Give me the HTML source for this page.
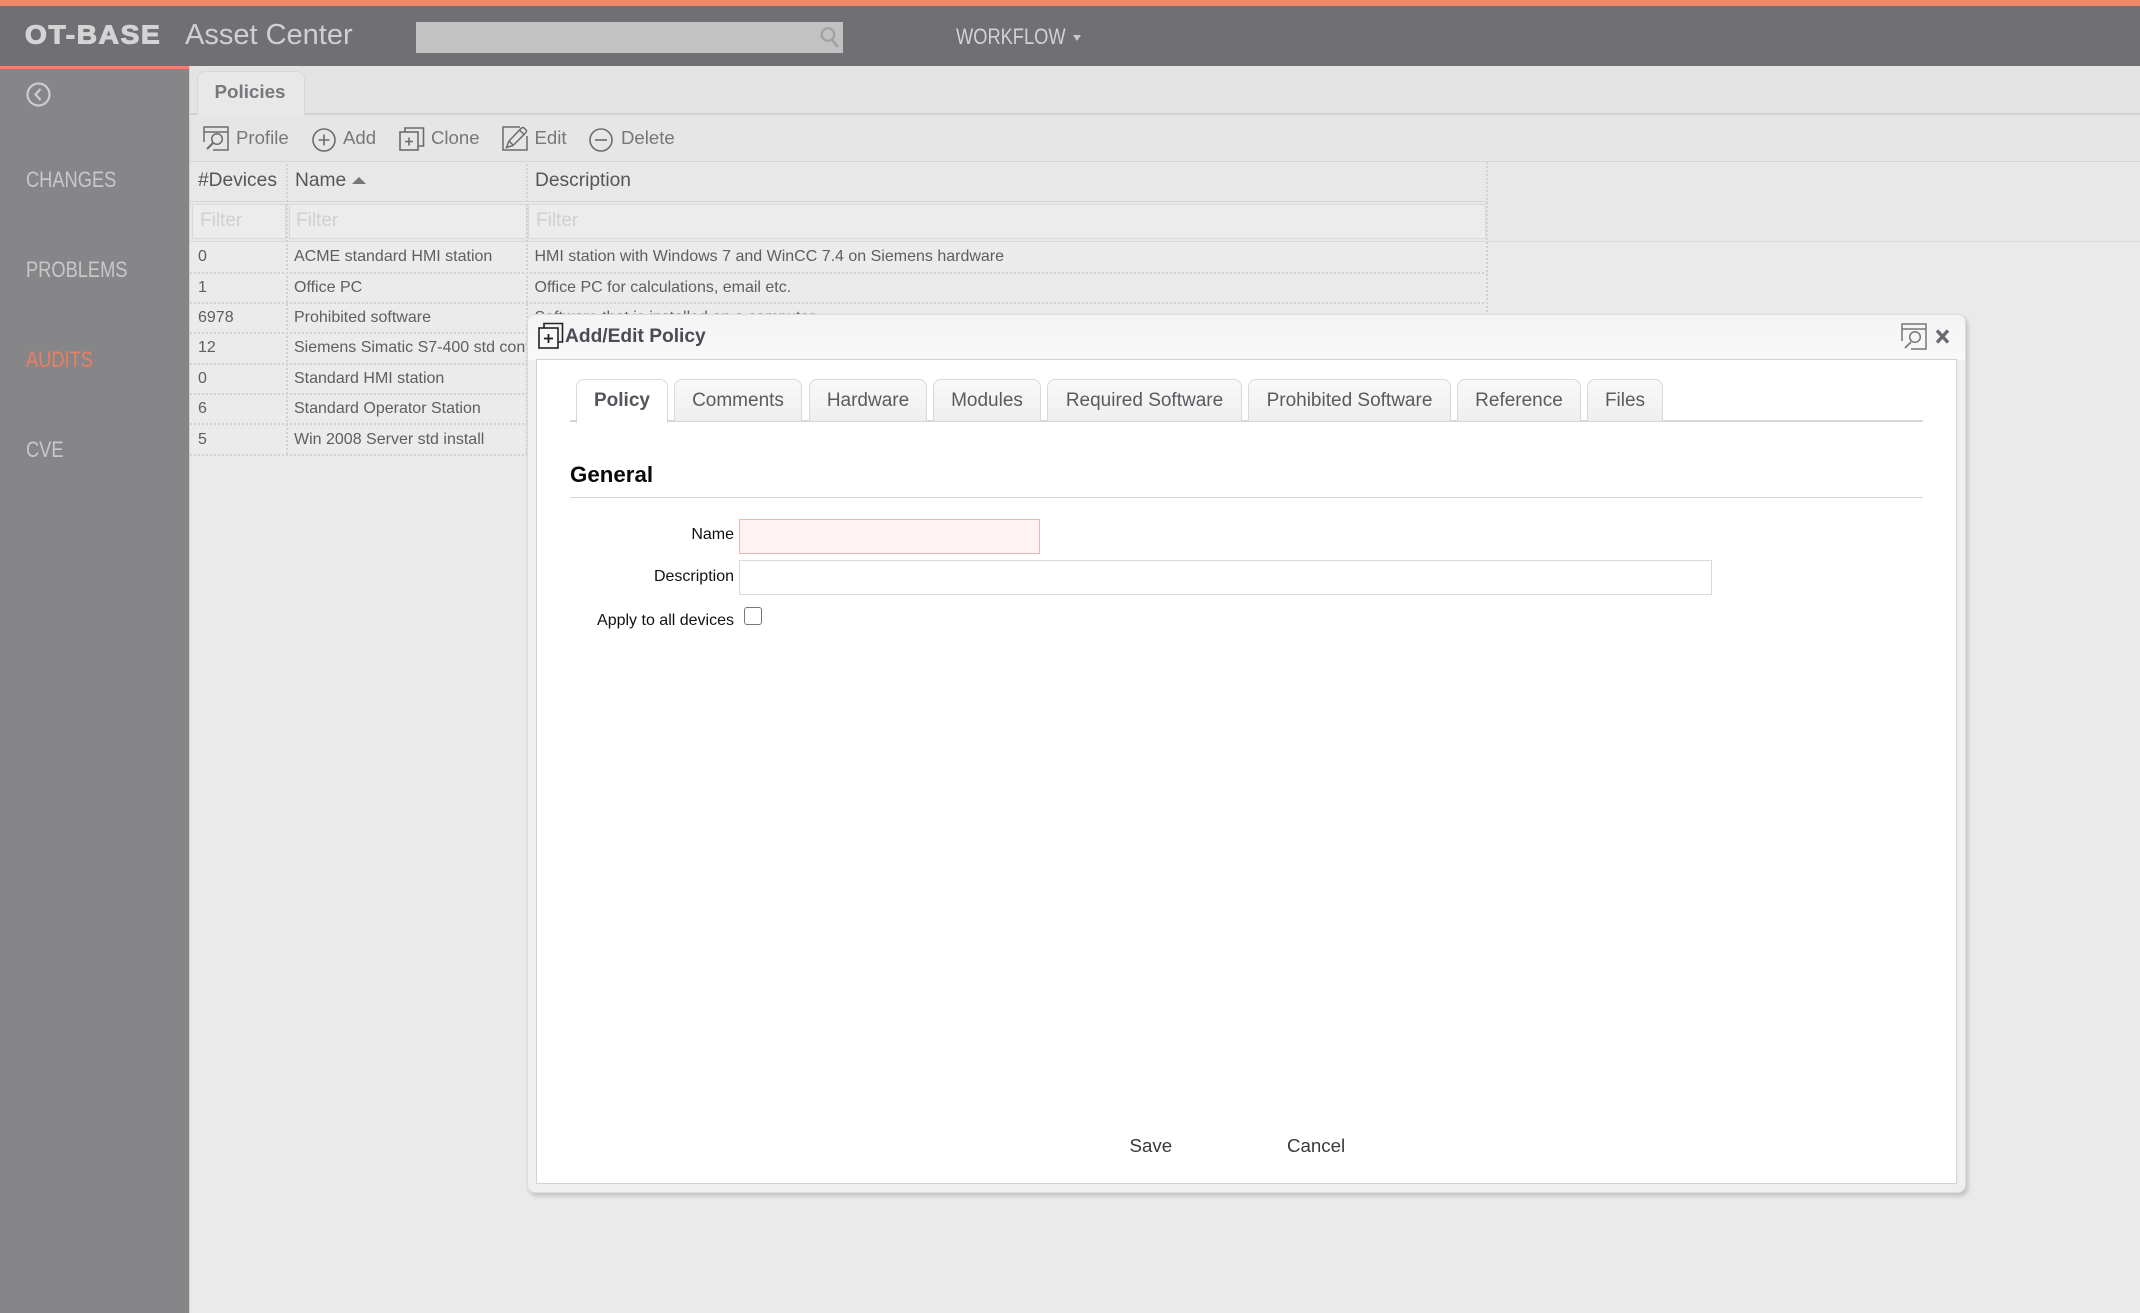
<!DOCTYPE html>
<html><head><meta charset="utf-8"><style>
html,body{margin:0;padding:0;width:2140px;height:1313px;overflow:hidden;background:#eaeaea}
body{font-family:"Liberation Sans",Arial,sans-serif;position:relative}
div,span,svg{position:absolute;box-sizing:border-box}
.t{white-space:nowrap;line-height:24px;height:24px}
.n{font-size:22px;color:#c8c8ca;transform:scaleX(.83);transform-origin:0 50%;left:25.5px}
.tb{font-size:18.6px;color:#77777a;top:125.5px}
.th{font-size:19.2px;color:#55555a;top:169px}
.fi{top:204px;height:35px;border:1.5px solid #dadada;background:#ececec}
.fl{font-size:19px;color:#d0d0d0;top:209px}
.c{font-size:16px;color:#5e5e62}
.hl{left:190px;height:2px;background:repeating-linear-gradient(90deg,#d2d2d2 0 2px,transparent 2px 4px)}
.vl{width:2px;background:repeating-linear-gradient(0deg,#d2d2d2 0 2px,transparent 2px 4px)}
.tab{top:379px;height:42px;border:1.5px solid #d9d9d9;border-bottom:none;border-radius:8px 8px 0 0;background:linear-gradient(#f9f9f9,#eeeeee);font-size:19px;color:#5a5a60;text-align:center;line-height:41px}
.lb{font-size:16px;color:#111;right:1406px}
</style></head><body>

<div style="left:0;top:0;width:2140px;height:66px;background:#706f74"></div>
<div style="left:0;top:0;width:2140px;height:6px;background:#ef8769"></div>
<span class="t" style="left:25px;top:21px;font-size:28px;line-height:28px;height:28px;font-weight:bold;color:#d4d4d5;letter-spacing:1.7px;-webkit-text-stroke:1.2px #d4d4d5;transform:scaleY(.92);transform-origin:0 50%">OT-BASE</span>
<span class="t" style="left:185px;top:17px;font-size:29px;line-height:36px;height:36px;color:#d0d0d2">Asset Center</span>
<div style="left:416px;top:22px;width:427px;height:31px;background:#c2c2c2"></div>
<svg style="left:819px;top:26px" width="22" height="22" viewBox="0 0 22 22" fill="none" stroke="#a3a3a3" stroke-width="2.4"><circle cx="9" cy="8.500" r="6.300"/><path d="M13 14l6 7" stroke-width="3"/></svg>
<span class="t n" style="left:955.5px;top:25px;font-size:22px;color:#d2d2d4">WORKFLOW</span>
<svg style="left:1073px;top:35px" width="8" height="6"><path d="M0 0h8L4 6z" fill="#c8c8ca"/></svg>

<div style="left:0;top:66px;width:189px;height:1247px;background:#868688"></div>
<div style="left:189px;top:66px;width:1px;height:1247px;background:#d0d0d0"></div>
<div style="left:0;top:66px;width:189px;height:3px;background:#ef8164"></div>
<svg style="left:26px;top:82px" width="25" height="25" viewBox="0 0 25 25" fill="none" stroke="#cdcdcf" stroke-width="2.2"><circle cx="12.500" cy="12.500" r="11"/><path d="M14.500 7l-5 5.500 5 5.500"/></svg>
<span class="t n" style="top:168px">CHANGES</span>
<span class="t n" style="top:258px">PROBLEMS</span>
<span class="t n" style="top:348px;color:#ef7d5f">AUDITS</span>
<span class="t n" style="top:438px">CVE</span>

<div style="left:190px;top:66px;width:1950px;height:47px;background:#e3e3e3"></div>
<div style="left:190px;top:113px;width:1950px;height:2px;background:#d2d2d2"></div>
<div style="left:197px;top:71px;width:108px;height:44px;background:#e8e8e8;border:1px solid #d8d8d8;border-bottom:none;border-radius:8px 8px 0 0"></div>
<span class="t" style="left:214.5px;top:80px;font-size:18.8px;font-weight:bold;color:#77777c">Policies</span>
<div style="left:190px;top:115px;width:1950px;height:46px;background:#e6e6e6"></div>
<div style="left:190px;top:161px;width:1950px;height:80px;background:#e8e8e8"></div>
<div style="left:190px;top:161px;width:1950px;height:1px;background:#d6d6d6"></div>
<div style="left:190px;top:241px;width:1950px;height:1px;background:#d9d9d9"></div>

<svg style="left:203px;top:126px" width="26" height="25" viewBox="0 0 26 25" fill="none" stroke="#6c6c6e" stroke-width="1.5"><path d="M1 16V1h24v23H10M1 6h24"/><circle cx="14" cy="13" r="5.300"/><path d="M10 17l-6 6" stroke-width="2"/></svg>
<span class="t tb" style="left:236px">Profile</span>
<svg style="left:312px;top:128px" width="24" height="24" viewBox="0 0 24 24" fill="none" stroke="#6c6c6e" stroke-width="1.6"><circle cx="12" cy="12" r="11"/><path d="M12 6.500v11M6.500 12h11"/></svg>
<span class="t tb" style="left:343px">Add</span>
<svg style="left:399px;top:126px" width="26" height="25" viewBox="0 0 26 25" fill="none" stroke="#6c6c6e" stroke-width="1.6"><rect x="1" y="6" width="18" height="18"/><path d="M6 6V2h18.500v18H19M10 11.500v8M6 15.500h8"/></svg>
<span class="t tb" style="left:431px">Clone</span>
<svg style="left:502px;top:126px" width="26" height="25" viewBox="0 0 26 25" fill="none" stroke="#6c6c6e" stroke-width="1.5"><path d="M18 1H1v23h24V10"/><path d="M4.500 21.500l2.500-6.500L19.500 2q1.500-1 2.500 0l2 2q1 1 0 2.500L11 19.500zM7 15l4.500 4.500M17.500 4l4.500 4.500"/></svg>
<span class="t tb" style="left:534.5px">Edit</span>
<svg style="left:589px;top:128px" width="24" height="24" viewBox="0 0 24 24" fill="none" stroke="#6c6c6e" stroke-width="1.6"><circle cx="12" cy="12" r="11"/><path d="M6 12h12"/></svg>
<span class="t tb" style="left:621px">Delete</span>

<span class="t th" style="left:198px">#Devices</span>
<span class="t th" style="left:295px">Name</span>
<svg style="left:352px;top:177px" width="14" height="7"><path d="M0 7h14L7 0z" fill="#77777a"/></svg>
<span class="t th" style="left:535px">Description</span>
<div style="left:190px;top:201px;width:1297px;height:1px;background:repeating-linear-gradient(90deg,#c8c8c8 0 1px,transparent 1px 2px)"></div>

<div class="fi" style="left:192px;width:94px"></div>
<div class="fi" style="left:288.5px;width:238px"></div>
<div class="fi" style="left:528px;width:958px"></div>
<span class="t fl" style="left:200px">Filter</span>
<span class="t fl" style="left:296px">Filter</span>
<span class="t fl" style="left:536px">Filter</span>

<div style="left:190px;top:242px;width:1297px;height:212px;background:#ebebeb"></div>
<div class="vl" style="left:286px;top:162px;height:292px"></div>
<div class="vl" style="left:526px;top:162px;height:292px"></div>
<div class="vl" style="left:1486px;top:162px;height:150px"></div>
<div class="hl" style="top:272px;width:1297px"></div>
<div class="hl" style="top:302px;width:1297px"></div>
<div class="hl" style="top:332px;width:340px"></div>
<div class="hl" style="top:363px;width:340px"></div>
<div class="hl" style="top:393px;width:340px"></div>
<div class="hl" style="top:423px;width:340px"></div>
<div class="hl" style="top:454px;width:340px"></div>

<span class="t c" style="left:198px;top:244.5px">0</span><span class="t c" style="left:294px;top:244.5px">ACME standard HMI station</span><span class="t c" style="left:534.5px;top:244.5px">HMI station with Windows 7 and WinCC 7.4 on Siemens hardware</span>
<span class="t c" style="left:198px;top:276px">1</span><span class="t c" style="left:294px;top:276px">Office PC</span><span class="t c" style="left:534.5px;top:276px">Office PC for calculations, email etc.</span>
<span class="t c" style="left:198px;top:306px">6978</span><span class="t c" style="left:294px;top:306px">Prohibited software</span><span class="t c" style="left:534.5px;top:306px">Software that is installed on a computer</span>
<span class="t c" style="left:198px;top:336px">12</span><span class="t c" style="left:294px;top:336px;width:232px;overflow:hidden">Siemens Simatic S7-400 std config</span>
<span class="t c" style="left:198px;top:367px">0</span><span class="t c" style="left:294px;top:367px">Standard HMI station</span>
<span class="t c" style="left:198px;top:397px">6</span><span class="t c" style="left:294px;top:397px">Standard Operator Station</span>
<span class="t c" style="left:198px;top:428px">5</span><span class="t c" style="left:294px;top:428px">Win 2008 Server std install</span>

<div style="left:526.5px;top:314px;width:1439px;height:879px;background:#efefef;border:1px solid #dcdcdc;border-radius:8px;box-shadow:2px 3px 5px rgba(0,0,0,.18);overflow:hidden">
  <div style="left:0;top:0;width:100%;height:45px;background:linear-gradient(#f4f4f4,#f8f8f8)"></div>
</div>
<div style="left:536px;top:359px;width:1421px;height:825px;background:#fff;border:1px solid #d2d2d2"></div>

<svg style="left:538px;top:322px" width="26" height="27" viewBox="0 0 26 27" fill="none" stroke="#222" stroke-width="1.600"><rect x="1" y="6" width="19" height="20" fill="#f7f7f7"/><path d="M6 6V1.500h18.500V20H20"/><path d="M10.500 12v9M6 16.500h9" stroke-width="1.800"/></svg>
<span class="t" style="left:565px;top:324.5px;font-size:19.2px;font-weight:bold;color:#4b4b55">Add/Edit Policy</span>
<svg style="left:1901px;top:323px" width="26" height="27" viewBox="0 0 26 27" fill="none" stroke="#77777a" stroke-width="1.500"><path d="M1 18V1h24v25H10M1 6h24"/><circle cx="14" cy="14" r="5.300"/><path d="M10 19l-6 6" stroke-width="1.800"/></svg>
<svg style="left:1935px;top:329px" width="15" height="15" viewBox="0 0 15 15" fill="none" stroke="#6a6a70" stroke-width="3.400"><path d="M2 1.500l11 12M13 1.500l-11 12"/></svg>

<div style="left:570px;top:420px;width:1353px;height:1.5px;background:#d6d6d6"></div>
<div class="tab" style="left:576px;width:92px;height:44px;background:#fff;font-weight:bold;color:#55555c">Policy</div>
<div class="tab" style="left:674px;width:128px">Comments</div>
<div class="tab" style="left:809px;width:118px">Hardware</div>
<div class="tab" style="left:933px;width:108px">Modules</div>
<div class="tab" style="left:1047px;width:195px">Required Software</div>
<div class="tab" style="left:1248px;width:203px">Prohibited Software</div>
<div class="tab" style="left:1457px;width:124px">Reference</div>
<div class="tab" style="left:1587px;width:76px">Files</div>

<span class="t" style="left:570px;top:463px;font-size:22.300px;font-weight:bold;color:#0a0a0a">General</span>
<div style="left:570px;top:496.5px;width:1353px;height:1.5px;background:#d6d6d6"></div>

<span class="t lb" style="top:523px">Name</span>
<div style="left:739px;top:519px;width:301px;height:35px;background:#fff2f2;border:1.500px solid #f3b3b3"></div>
<span class="t lb" style="top:565px">Description</span>
<div style="left:739px;top:560px;width:973px;height:35px;background:#fff;border:1.500px solid #d9d9d9"></div>
<span class="t lb" style="top:609px">Apply to all devices</span>
<div style="left:744px;top:607px;width:18px;height:18px;background:#fff;border:1.500px solid #767676;border-radius:3px"></div>

<span class="t" style="left:1129.5px;top:1133.5px;font-size:18.700px;color:#3a3a3a">Save</span>
<span class="t" style="left:1287px;top:1133.5px;font-size:18.700px;color:#3a3a3a">Cancel</span>

</body></html>
